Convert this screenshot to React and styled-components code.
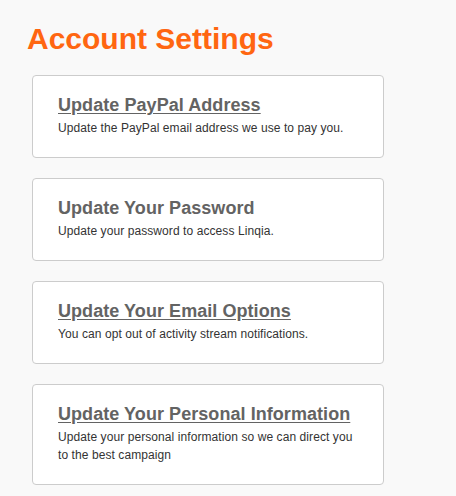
import React from "react";
import styled, { createGlobalStyle } from "styled-components";

const GlobalStyle = createGlobalStyle`
    html, body {
        margin: 0;
        padding: 0;
        background: #f9f9f9;
    }
`;

const Page = styled.div`
    min-height: 100vh;
    padding: 21px 0 0 27px;
    font-family: "Liberation Sans", Arial, sans-serif;
    box-sizing: border-box;
`;

const PageTitle = styled.h1`
    margin: 0 0 18px;
    font-size: 30px;
    line-height: 36px;
    font-weight: 700;
    color: #ff6611;
`;

const CardList = styled.div`
    display: flex;
    flex-direction: column;
    gap: 20px;
    margin-left: 5px;
    width: 352px;
`;

const Card = styled.div`
    background: #fff;
    border: 1px solid #cccccc;
    border-radius: 4px;
    padding: 18px 25px 20px;
`;

const CardTitle = styled.a`
    display: block;
    font-size: 18px;
    line-height: 22px;
    font-weight: 700;
    letter-spacing: 0.06px;
    color: #636363;
    text-decoration: ${(p) => (p.$link ? "underline" : "none")};
    text-underline-offset: 2px;
`;

const CardText = styled.p`
    margin: 3px 0 0;
    font-size: 12px;
    line-height: 18px;
    letter-spacing: 0.08px;
    color: #333333;
`;

const settings = [
    {
        title: "Update PayPal Address",
        text: "Update the PayPal email address we use to pay you.",
        link: true,
    },
    {
        title: "Update Your Password",
        text: "Update your password to access Linqia.",
        link: false,
    },
    {
        title: "Update Your Email Options",
        text: "You can opt out of activity stream notifications.",
        link: true,
    },
    {
        title: "Update Your Personal Information",
        text: "Update your personal information so we can direct you to the best campaign",
        link: true,
    },
];

const App = () => (
    <Page>
        <GlobalStyle />
        <PageTitle>Account Settings</PageTitle>
        <CardList>
            {settings.map((s) => (
                <Card key={s.title}>
                    <CardTitle $link={s.link}>{s.title}</CardTitle>
                    <CardText>{s.text}</CardText>
                </Card>
            ))}
        </CardList>
    </Page>
);

export default App;
